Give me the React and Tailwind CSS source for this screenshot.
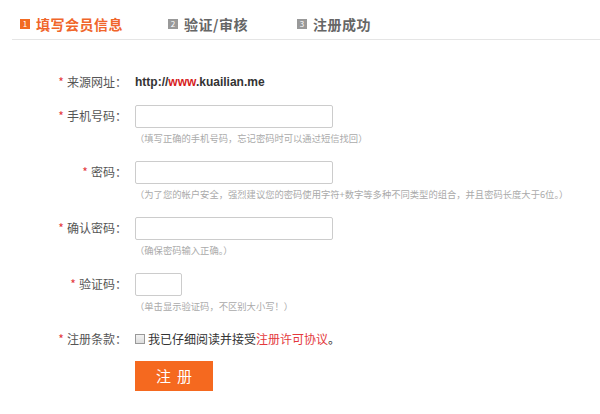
const font = { fontFamily: '"Noto Sans CJK SC", "Liberation Sans", sans-serif' };

const Step = ({ num, label, active }) => (
  <div className={`flex items-center gap-[6px] ${active ? "text-[#f0652a]" : "text-[#666]"}`}>
    <span
      className={`flex h-[10px] w-[10px] items-center justify-center text-[8px] leading-none font-normal text-white ${
        active ? "bg-[#f26b22]" : "bg-[#999]"
      }`}
    >
      {num}
    </span>
    <span className="text-[14px] font-bold leading-none tracking-[0.5px]">{label}</span>
  </div>
);

const Label = ({ children }) => (
  <div className="w-[135px] shrink-0 pr-[8px] text-right text-[12px] text-[#555]">
    <span className="mr-[3px] text-[#e4393c]">*</span>
    {children}：
  </div>
);

const Hint = ({ children }) => (
  <div className="mt-[4px] whitespace-nowrap text-[9.3px] leading-[12px] text-[#aaa]">（{children}）</div>
);

const Field = ({ label, width = "w-[198px]", hint }) => (
  <div className="flex">
    <Label>
      <span className="leading-[23px]">{label}</span>
    </Label>
    <div>
      <input className={`${width} h-[23px] rounded-[2px] border border-[#ccc] bg-white outline-none`} />
      <Hint>{hint}</Hint>
    </div>
  </div>
);

export default function App() {
  return (
    <div className="h-[414px] w-[600px] overflow-hidden bg-white" style={font}>
      <div className="ml-[12px] flex h-[40px] items-center border-b border-[#e5e5e5] pl-[8px] pt-[8px]">
        <Step num="1" label="填写会员信息" active />
        <div className="ml-[45px]">
          <Step num="2" label="验证/审核" />
        </div>
        <div className="ml-[49px]">
          <Step num="3" label="注册成功" />
        </div>
      </div>

      <div className="flex flex-col pt-[33px]">
        <div className="flex items-center leading-[18px]">
          <Label>来源网址</Label>
          <div className="font-['Liberation_Sans',sans-serif] text-[12px] font-bold text-[#333]">
            http://<span className="text-[#d71b1b]">www</span>.kuailian.me
          </div>
        </div>

        <div className="mt-[13px] flex flex-col gap-[16px]">
          <Field label="手机号码" hint="填写正确的手机号码，忘记密码时可以通过短信找回" />
          <Field
            label="密码"
            hint="为了您的帐户安全，强烈建议您的密码使用字符+数字等多种不同类型的组合，并且密码长度大于6位。"
          />
          <Field label="确认密码" hint="确保密码输入正确。" />
          <Field label="验证码" width="w-[47px]" hint="单击显示验证码，不区别大小写！" />
        </div>

        <div className="mt-[18px] flex items-center leading-[18px]">
          <Label>注册条款</Label>
          <label className="flex items-center gap-[3px] text-[12px] text-[#333]">
            <span className="h-[10px] w-[10px] border border-[#999] bg-gradient-to-b from-[#f3f3f3] to-[#ddd]" />
            <span>
              我已仔细阅读并接受<span className="text-[#e4393c]">注册许可协议</span>。
            </span>
          </label>
        </div>

        <div className="ml-[135px] mt-[13px]">
          <button className="h-[30px] w-[78px] bg-[#f5691f] pl-[6px] text-[15px] tracking-[6px] text-white">注册</button>
        </div>
      </div>
    </div>
  );
}
